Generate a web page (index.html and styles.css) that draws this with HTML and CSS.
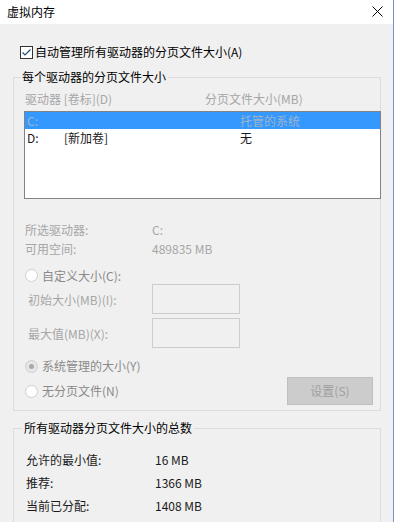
FILE: index.html
```html
<!DOCTYPE html>
<html>
	<head>
		<meta charset="UTF-8">
		<title>虚拟内存</title>
		<link rel="stylesheet" href="styles.css">
	</head>
	<body>
		<div class="window">
			<div class="titlebar">
				<span class="title">虚拟内存</span>
				<svg class="close" width="11" height="11" viewBox="0 0 11 11">
					<path d="M0.5 0.5 L10.5 10.5 M10.5 0.5 L0.5 10.5" stroke="#000" stroke-width="1" fill="none"/>
				</svg>
			</div>
			<div class="content">
				<label class="autorow">
					<svg class="checkbox" width="13" height="13" viewBox="0 0 13 13">
						<rect x="0.5" y="0.5" width="12" height="12" fill="#fff" stroke="#333" stroke-width="1"/>
						<path d="M2.5 6.5 L5 9 L10.5 3.5" stroke="#1f4f7a" stroke-width="1.2" fill="none"/>
					</svg>
					自动管理所有驱动器的分页文件大小(A)
				</label>

				<fieldset class="group group-drives">
					<legend>每个驱动器的分页文件大小</legend>
					<div class="listhead">
						<span class="col-drive">驱动器 [卷标](D)</span>
						<span>分页文件大小(MB)</span>
					</div>
					<div class="listbox">
						<div class="item selected">
							<span class="c1">C:</span><span class="c2"></span><span>托管的系统</span>
						</div>
						<div class="item">
							<span class="c1">D:</span><span class="c2">[新加卷]</span><span>无</span>
						</div>
					</div>

					<div class="info">
						<div class="inforow"><span class="infolabel">所选驱动器:</span><span>C:</span></div>
						<div class="inforow"><span class="infolabel">可用空间:</span><span>489835 MB</span></div>
					</div>

					<div class="radiorow first">
						<span class="radio"></span>自定义大小(C):
					</div>
					<div class="sizerow">
						<span class="sizelabel">初始大小(MB)(I):</span><span class="sizebox"></span>
					</div>
					<div class="sizerow second">
						<span class="sizelabel">最大值(MB)(X):</span><span class="sizebox"></span>
					</div>
					<div class="radiorow">
						<span class="radio checked"></span>系统管理的大小(Y)
					</div>
					<div class="radiorow lastrow">
						<span class="radio"></span>无分页文件(N)
						<span class="button">设置(S)</span>
					</div>
				</fieldset>

				<fieldset class="group group-total">
					<legend>所有驱动器分页文件大小的总数</legend>
					<div class="totalrow first"><span class="totallabel">允许的最小值:</span><span>16 MB</span></div>
					<div class="totalrow"><span class="totallabel">推荐:</span><span>1366 MB</span></div>
					<div class="totalrow"><span class="totallabel">当前已分配:</span><span>1408 MB</span></div>
				</fieldset>
			</div>
		</div>
	</body>
</html>
```

FILE: styles.css
```css
html, body {
	margin: 0;
	padding: 0;
	background-color: #ffffff;
}
body {
	font-family: "Noto Sans CJK SC", "Noto Sans", sans-serif;
	font-size: 12px;
	color: #1a1a1a;
}
.window {
	width: 393px;
	height: 522px;
	border-right: 1px solid #6f97c4;
	background-color: #f0f0f0;
	overflow: hidden;
	display: flex;
	flex-direction: column;
}
.titlebar {
	flex-shrink: 0;
	height: 24px;
	background-color: #ffffff;
	display: flex;
	align-items: center;
	justify-content: space-between;
	padding: 0 10px 1px 7px;
	box-sizing: border-box;
}
.title {
	line-height: 16px;
	color: #000000;
}
.close {
	margin-top: -1px;
}
.content {
	flex-shrink: 0;
	padding-left: 13px;
}
.autorow {
	display: flex;
	align-items: center;
	height: 16px;
	line-height: 16px;
	margin-top: 20px;
	margin-left: 7px;
	color: #000000;
}
.checkbox {
	margin-right: 2px;
}

/* group boxes */
.group {
	width: 368px;
	box-sizing: border-box;
	margin: 0;
	border: 1px solid #dcdcdc;
	padding: 0 0 5px 10px;
	min-width: 0;
}
.group legend {
	padding: 0 2px;
	margin-left: -4px;
	line-height: 16px;
	color: #000000;
}
.group-drives {
	margin-top: 9px;
}
.group-total {
	margin-top: 9px;
	height: 120px;
	padding-left: 12px;
}

.listhead {
	display: flex;
	line-height: 16px;
	margin-top: 6px;
	padding-left: 1px;
	color: #a6a6a6;
}
.col-drive {
	width: 180px;
}
.listbox {
	margin-top: 4px;
	width: 357px;
	height: 88px;
	box-sizing: border-box;
	border: 1px solid #828282;
	background-color: #ffffff;
}
.item {
	display: flex;
	height: 17px;
	line-height: 17px;
	padding-left: 2px;
	color: #1a1a1a;
}
.item.selected {
	background-color: #3399ff;
	color: #9fb3c9;
}
.c1 {
	width: 37px;
}
.c2 {
	width: 176px;
}

.info {
	margin-top: 21px;
	color: #a6a6a6;
}
.inforow {
	display: flex;
	height: 19px;
	line-height: 19px;
	padding-left: 1px;
}
.infolabel {
	width: 127px;
}

.radiorow {
	display: flex;
	align-items: center;
	height: 18px;
	line-height: 18px;
	margin-top: 9px;
	padding-left: 1px;
	color: #8a8a8a;
}
.radiorow.first {
	height: 17px;
}
.radio {
	width: 11px;
	height: 11px;
	border: 1px solid #cfcfcf;
	border-radius: 50%;
	background-color: #ffffff;
	margin-right: 4px;
	position: relative;
}
.radio.checked {
	background-color: #e6e6e6;
}
.radio.checked::after {
	content: "";
	position: absolute;
	left: 3px;
	top: 3px;
	width: 5px;
	height: 5px;
	border-radius: 50%;
	background-color: #a8a8a8;
}
.sizerow {
	display: flex;
	align-items: center;
	height: 30px;
	padding-left: 4px;
	color: #a6a6a6;
}
.sizerow.second {
	margin-top: 4px;
}
.sizelabel {
	width: 124px;
}
.sizebox {
	width: 88px;
	height: 30px;
	box-sizing: border-box;
	border: 1px solid #cccccc;
	background-color: #f0f0f0;
}
.radiorow.lastrow {
	height: 28px;
	margin-top: 2px;
}
.button {
	margin-left: auto;
	margin-right: 7px;
	width: 86px;
	height: 28px;
	box-sizing: border-box;
	border: 1px solid #bfbfbf;
	background-color: #cccccc;
	color: #a0a0a0;
	text-align: center;
	line-height: 26px;
}

.totalrow {
	display: flex;
	height: 23px;
	line-height: 23px;
	color: #1a1a1a;
}
.totalrow.first {
	margin-top: 12px;
}
.totallabel {
	width: 129px;
}
```
